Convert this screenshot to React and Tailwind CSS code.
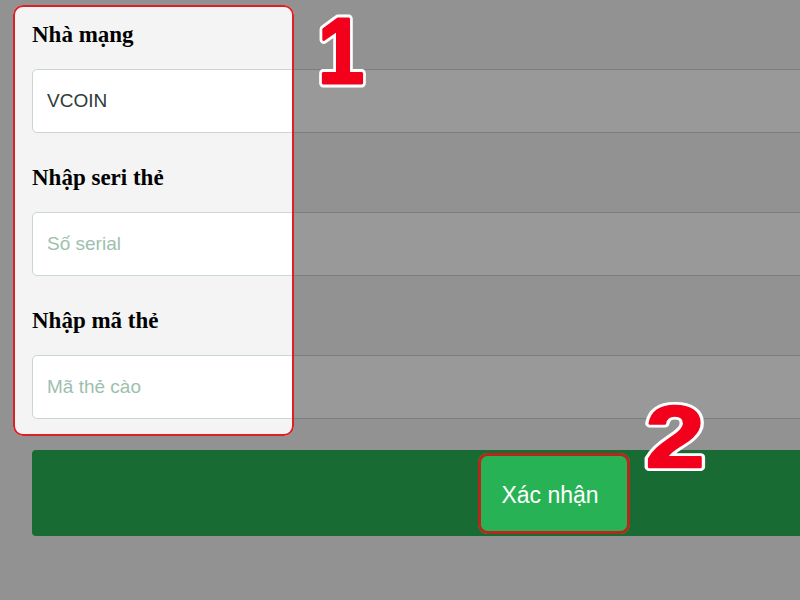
import React from 'react';

const fields = [
  { label: 'Nhà mạng', value: 'VCOIN', placeholder: '' },
  { label: 'Nhập seri thẻ', value: '', placeholder: 'Số serial' },
  { label: 'Nhập mã thẻ', value: '', placeholder: 'Mã thẻ cào' },
];

// dim layer with two cut-outs: the form panel and the submit button
const Spotlight = () => (
  <svg className="absolute inset-0 pointer-events-none" width="800" height="600" viewBox="0 0 800 600">
    <path
      fillRule="evenodd"
      fill="rgba(0,0,0,0.4)"
      d="M0 0H800V600H0Z M23 5H284A10 10 0 0 1 294 15V426A10 10 0 0 1 284 436H23A10 10 0 0 1 13 426V15A10 10 0 0 1 23 5Z M487 453H621A9 9 0 0 1 630 462V525A9 9 0 0 1 621 534H487A9 9 0 0 1 478 525V462A9 9 0 0 1 487 453Z"
    />
    <rect x="14" y="6" width="279" height="429" rx="9" fill="none" stroke="#dc2026" strokeWidth="2" />
    <rect x="479.5" y="454.5" width="149" height="78" rx="8" fill="none" stroke="#b8261c" strokeWidth="3" />
    <g fontFamily="'Liberation Sans', Arial, sans-serif" fontWeight="700" textAnchor="middle">
      <g transform="translate(341 83) scale(0.9 1)">
        <text x="0" y="0" fontSize="92" fill="#f2001c" stroke="#fff" strokeWidth="9" strokeLinejoin="round" paintOrder="stroke">1</text>
        <text x="0" y="0" fontSize="92" fill="#f2001c" stroke="#f2001c" strokeWidth="3" strokeLinejoin="round">1</text>
      </g>
      <g transform="translate(675 467) scale(1.2 1)">
        <text x="0" y="0" fontSize="88" fill="#f2001c" stroke="#fff" strokeWidth="8" strokeLinejoin="round" paintOrder="stroke">2</text>
        <text x="0" y="0" fontSize="88" fill="#f2001c" stroke="#f2001c" strokeWidth="2.5" strokeLinejoin="round">2</text>
      </g>
    </g>
  </svg>
);

export default function App() {
  return (
    <div className="relative w-[800px] h-[600px] overflow-hidden bg-[#f4f4f4]">
      <div className="w-[1076px] pl-8 pt-[21px]">
        {fields.map((f) => (
          <div key={f.label} className="mb-[31px]">
            <div className="h-[28px] leading-[28px] text-[23px] font-bold text-black font-['Liberation_Serif',serif]">
              {f.label}
            </div>
            <input
              readOnly
              value={f.value}
              placeholder={f.placeholder}
              className="mt-5 block w-full h-[64px] rounded-[5px] border border-[#c9d6d1] bg-white px-[14px] text-[19px] text-[#2d3b37] placeholder:text-[#9dbfae] outline-none font-['Liberation_Sans',Arial,sans-serif]"
            />
          </div>
        ))}
        <div className="mt-[2px] flex justify-center h-[86px] rounded-[4px] bg-[#28b256]">
          <button className="h-full pl-6 pr-8 pt-[4px] text-[23px] text-white font-['Liberation_Sans',Arial,sans-serif]">
            Xác nhận
          </button>
        </div>
      </div>
      <Spotlight />
    </div>
  );
}
